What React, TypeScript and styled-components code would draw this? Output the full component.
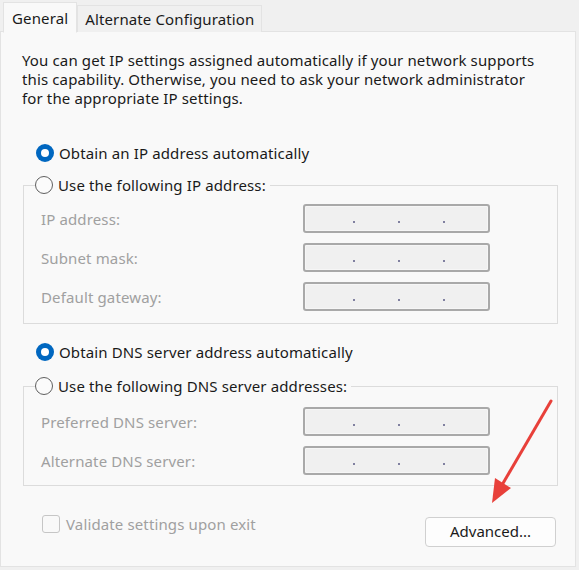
import React from "react";
import styled, { createGlobalStyle } from "styled-components";

const Global = createGlobalStyle`
  html, body { margin: 0; padding: 0; background: #f0f0f0; }
  * { box-sizing: border-box; }
  body { font-family: "Noto Sans", "Liberation Sans", sans-serif; font-size: 15px; letter-spacing: 0.13px; color: #1a1a1a; }
`;

const Window = styled.div`
  position: relative;
  width: 579px;
  height: 570px;
  background: #f0f0f0;
  display: flex;
  flex-direction: column;
`;

const TabBar = styled.div`
  display: flex;
  align-items: flex-end;
  height: 32px;
  padding-left: 3px;
  position: relative;
  z-index: 1;
`;

const Tab = styled.div<{ $active?: boolean }>`
  height: ${(p) => (p.$active ? "31px" : "27px")};
  padding: 0 ${(p) => (p.$active ? "8px" : "7px")};
  display: flex;
  align-items: center;
  border: 1px solid #e3e3e3;
  border-bottom: ${(p) => (p.$active ? "1px solid #f9f9f9" : "none")};
  background: ${(p) => (p.$active ? "#f9f9f9" : "#f0f0f0")};
  margin-bottom: ${(p) => (p.$active ? "-1px" : "0")};
  color: #1a1a1a;
  white-space: nowrap;
`;

const Panel = styled.div`
  width: 576px;
  height: 536px;
  margin-top: -1px;
  background: #f9f9f9;
  border: 1px solid #e3e3e3;
  padding: 19px 18px 0 21px;
  display: flex;
  flex-direction: column;
`;

const Intro = styled.p`
  margin: 0;
  line-height: 19px;
  white-space: nowrap;
`;

const RadioRow = styled.label<{ $top: number }>`
  display: flex;
  align-items: center;
  gap: 5px;
  height: 20px;
  margin-top: ${(p) => p.$top}px;
  margin-left: 14px;
  white-space: nowrap;
`;

const RadioCircle = styled.span<{ $checked?: boolean }>`
  width: 18px;
  height: 18px;
  border-radius: 50%;
  flex: none;
  background: ${(p) => (p.$checked ? "#0067c0" : "#fbfbfb")};
  border: ${(p) => (p.$checked ? "none" : "1px solid #5f5f5f")};
  display: flex;
  align-items: center;
  justify-content: center;
  &::after {
    content: "";
    display: ${(p) => (p.$checked ? "block" : "none")};
    width: 8px;
    height: 8px;
    border-radius: 50%;
    background: #fff;
  }
`;

const Group = styled.fieldset<{ $top: number; $padTop: number; $padBottom: number }>`
  margin: ${(p) => p.$top}px 0 0 1px;
  width: 535px;
  border: 1px solid #dcdcdc;
  padding: ${(p) => p.$padTop}px 0 ${(p) => p.$padBottom}px 17px;
  display: grid;
  grid-template-columns: 262px 187px;
  row-gap: 10px;
  align-items: center;
`;

const Legend = styled.legend`
  padding: 0 4px 0 0;
  margin-left: -6px;
  display: flex;
  align-items: center;
  gap: 5px;
  height: 20px;
  white-space: nowrap;
`;

const FieldLabel = styled.span`
  color: #a0a0a0;
  white-space: nowrap;
`;

const IpBox = styled.div`
  height: 29px;
  border: 2px solid #a9a9a9;
  border-radius: 3px;
  background: #f0f0f0;
  box-shadow: inset 0 0 0 1px #f6f6f6;
  display: grid;
  grid-template-columns: 50px 45px 45px 45px;
  align-items: end;
  padding-bottom: 8px;
`;

const Dot = styled.span`
  width: 2px;
  height: 2px;
  background: #8080a0;
  justify-self: end;
`;

const Footer = styled.div`
  display: flex;
  align-items: flex-start;
  justify-content: space-between;
  margin-top: 28px;
  padding-left: 20px;
`;

const CheckRow = styled.label`
  display: flex;
  align-items: center;
  gap: 6px;
  height: 20px;
  color: #a0a0a0;
`;

const CheckBox = styled.span`
  width: 18px;
  height: 18px;
  border: 1px solid #c6c6c6;
  border-radius: 3px;
  background: #f9f9f9;
`;

const Button = styled.button`
  width: 131px;
  height: 30px;
  margin: 3px 1px 0 0;
  border: 1px solid #d0d0d0;
  border-radius: 4px;
  background: #fdfdfd;
  font: inherit;
  color: #1a1a1a;
  padding: 0 0 2px;
`;

const Arrow = styled.svg`
  position: absolute;
  left: 0;
  top: 0;
  pointer-events: none;
`;

const IpField = () => (
  <IpBox>
    <Dot />
    <Dot />
    <Dot />
  </IpBox>
);

export default function App() {
  return (
    <>
      <Global />
      <Window>
        <TabBar>
          <Tab $active>General</Tab>
          <Tab>Alternate Configuration</Tab>
        </TabBar>
        <Panel>
          <Intro>
            You can get IP settings assigned automatically if your network supports
            <br />
            this capability. Otherwise, you need to ask your network administrator
            <br />
            for the appropriate IP settings.
          </Intro>
          <RadioRow $top={35}>
            <RadioCircle $checked />
            Obtain an IP address automatically
          </RadioRow>
          <Group $top={12} $padTop={9} $padBottom={12}>
            <Legend>
              <RadioCircle />
              Use the following IP address:
            </Legend>
            <FieldLabel>IP address:</FieldLabel>
            <IpField />
            <FieldLabel>Subnet mask:</FieldLabel>
            <IpField />
            <FieldLabel>Default gateway:</FieldLabel>
            <IpField />
          </Group>
          <RadioRow $top={18}>
            <RadioCircle $checked />
            Obtain DNS server address automatically
          </RadioRow>
          <Group $top={14} $padTop={11} $padBottom={10}>
            <Legend>
              <RadioCircle />
              Use the following DNS server addresses:
            </Legend>
            <FieldLabel>Preferred DNS server:</FieldLabel>
            <IpField />
            <FieldLabel>Alternate DNS server:</FieldLabel>
            <IpField />
          </Group>
          <Footer>
            <CheckRow>
              <CheckBox />
              Validate settings upon exit
            </CheckRow>
            <Button>Advanced...</Button>
          </Footer>
        </Panel>
        <Arrow width="579" height="570" viewBox="0 0 579 570">
          <line x1="551" y1="401" x2="502" y2="485" stroke="#e8403a" strokeWidth="3" strokeLinecap="round" />
          <polygon points="492,503 495,478 511,488" fill="#e8403a" />
        </Arrow>
      </Window>
    </>
  );
}
